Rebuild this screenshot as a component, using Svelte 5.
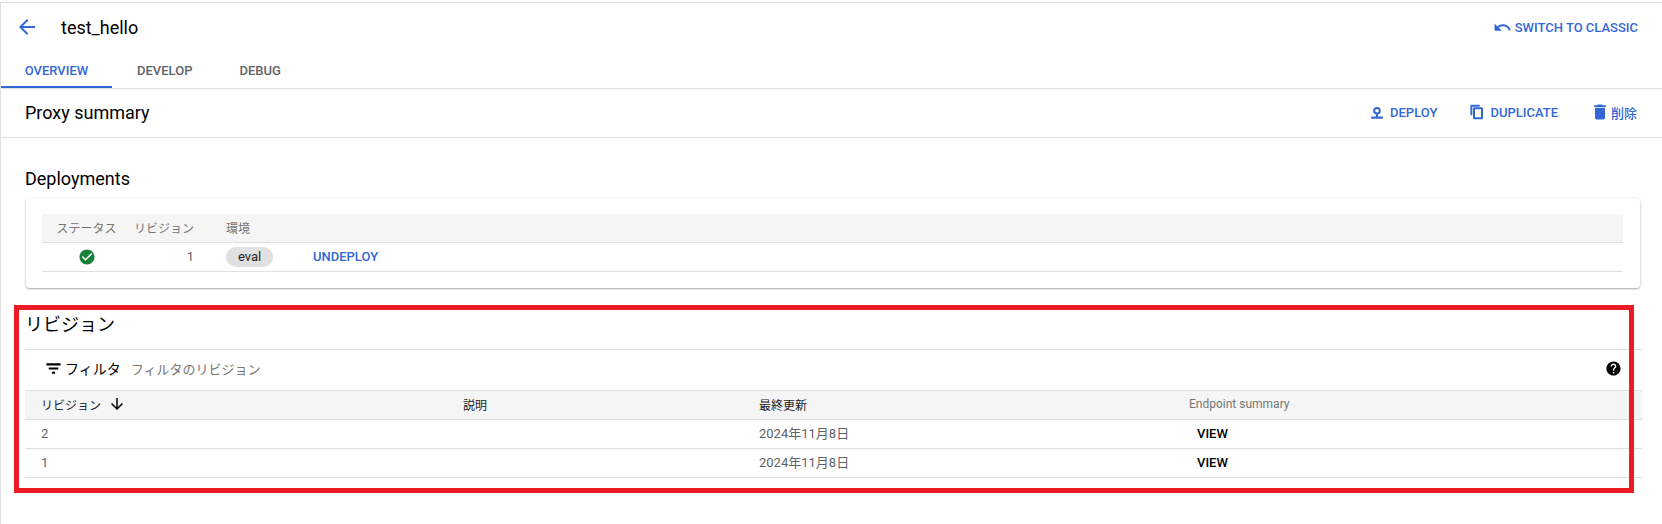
<script>
  const revisions = [
    { id: 2, updated: '2024年11月8日' },
    { id: 1, updated: '2024年11月8日' }
  ];
</script>

<div class="page">
  <header class="top">
    <div class="title-row">
      <svg class="back" viewBox="0 0 24 24"><path d="M20 11H7.83l5.59-5.59L12 4l-8 8 8 8 1.41-1.41L7.83 13H20v-2z" /></svg>
      <h1>test_hello</h1>
      <button class="link switch">
        <svg viewBox="0 0 24 24"><path d="M12.5 8c-2.65 0-5.05.99-6.9 2.6L2 7v9h9l-3.62-3.62c1.39-1.16 3.16-1.88 5.12-1.88 3.54 0 6.55 2.31 7.6 5.5l2.37-.78C21.08 11.03 17.15 8 12.5 8z" /></svg>
        SWITCH TO CLASSIC
      </button>
    </div>
    <nav class="tabs">
      <span class="tab active">OVERVIEW</span>
      <span class="tab">DEVELOP</span>
      <span class="tab">DEBUG</span>
    </nav>
  </header>

  <div class="summary">
    <h2>Proxy summary</h2>
    <div class="actions">
      <button class="link">
        <svg class="wide" viewBox="0 0 24 24"><path d="M5 17.5h14V20H5v-2.5zM12 5.9a4.6 4.6 0 1 1 0 9.2 4.6 4.6 0 0 1 0-9.2zm0 2.4a2.2 2.2 0 1 0 0 4.4 2.2 2.2 0 0 0 0-4.4zM10.8 14h2.4v4h-2.4z" /></svg>
        DEPLOY
      </button>
      <button class="link">
        <svg class="small" viewBox="0 0 24 24"><path d="M16 1H4c-1.1 0-2 .9-2 2v14h3V4h11V1zm3 4H8c-1.1 0-2 .9-2 2v14c0 1.1.9 2 2 2h11c1.1 0 2-.9 2-2V7c0-1.1-.9-2-2-2zm-1 15H9V8h9v12z" /></svg>
        DUPLICATE
      </button>
      <button class="link trash">
        <svg class="wide" viewBox="0 0 24 24"><path d="M6 19c0 1.1.9 2 2 2h8c1.1 0 2-.9 2-2V7H6v12zM19 4h-3.5l-1-1h-5l-1 1H5v2h14V4z" /></svg>
        削除
      </button>
    </div>
  </div>

  <section class="deployments">
    <h3>Deployments</h3>
    <div class="card">
      <div class="dep-row dep-head">
        <span class="c-status">ステータス</span>
        <span class="c-rev">リビジョン</span>
        <span class="c-env">環境</span>
      </div>
      <div class="dep-row dep-body">
        <span class="c-status ok">
          <svg viewBox="0 0 24 24"><path d="M12 2C6.48 2 2 6.48 2 12s4.48 10 10 10 10-4.48 10-10S17.52 2 12 2zm-2 15-5-5 1.41-1.41L10 14.17l7.59-7.59L19 8l-9 9z" /></svg>
        </span>
        <span class="c-rev num">1</span>
        <span class="c-env"><span class="chip">eval</span></span>
        <span class="undeploy">UNDEPLOY</span>
      </div>
    </div>
  </section>

  <section class="revisions">
    <h3 class="rev-title">リビジョン</h3>
    <div class="filter">
      <svg class="filter-icon" viewBox="0 0 24 24"><path d="M3 5.5h18v2.6H3zM6 10.7h12v2.6H6zM10 16h4v2.6h-4z" /></svg>
      <span class="filter-label">フィルタ</span>
      <span class="filter-hint">フィルタのリビジョン</span>
      <svg class="help" viewBox="0 0 24 24"><path d="M12 2C6.48 2 2 6.48 2 12s4.48 10 10 10 10-4.48 10-10S17.52 2 12 2zm1 17h-2v-2h2v2zm2.07-7.75-.9.92C13.45 12.9 13 13.5 13 15h-2v-.5c0-1.1.45-2.1 1.17-2.83l1.24-1.26c.37-.36.59-.86.59-1.41 0-1.1-.9-2-2-2s-2 .9-2 2H8c0-2.21 1.79-4 4-4s4 1.79 4 4c0 .88-.36 1.68-.93 2.25z" /></svg>
    </div>
    <div class="rev-row rev-head">
      <span class="r-id sorted">
        リビジョン
        <svg viewBox="0 0 24 24"><path d="M20 12l-1.41-1.41L13 16.17V4h-2v12.17l-5.58-5.59L4 12l8 8 8-8z" /></svg>
      </span>
      <span class="r-desc">説明</span>
      <span class="r-date">最終更新</span>
      <span class="r-end">Endpoint summary</span>
    </div>
    {#each revisions as rev (rev.id)}
      <div class="rev-row rev-body">
        <span class="r-id">{rev.id}</span>
        <span class="r-desc"></span>
        <span class="r-date">{rev.updated}</span>
        <span class="r-end view">VIEW</span>
      </div>
    {/each}
  </section>

  <div class="highlight"></div>
</div>

<style>
  :global(body) {
    margin: 0;
    background: #fff;
  }

  .page {
    position: relative;
    box-sizing: border-box;
    height: 522px;
    overflow: hidden;
    margin-top: 2px;
    border-top: 1px solid #e0e0e0;
    border-left: 1px solid #e0e0e0;
    font-family: Roboto, "Noto Sans CJK JP", sans-serif;
    color: #000;
  }

  h1,
  h2,
  h3 {
    margin: 0;
    font-weight: 400;
    font-size: 18px;
  }

  svg {
    fill: currentColor;
    display: block;
    flex: none;
  }

  .link {
    display: flex;
    align-items: center;
    gap: 3px;
    padding: 0;
    border: none;
    background: none;
    font: inherit;
    font-size: 13px;
    font-weight: 500;
    color: #3367d6;
  }

  .link svg.wide {
    width: 20px;
    height: 20px;
  }

  .link svg.small {
    width: 16px;
    height: 16px;
    margin-right: 2px;
  }

  .trash {
    gap: 1px;
  }

  .switch svg {
    width: 19px;
    height: 19px;
  }

  .top {
    border-bottom: 1px solid #e0e0e0;
    height: 85px;
  }

  .title-row {
    display: flex;
    align-items: center;
    height: 48px;
    padding: 0 24px 0 14px;
  }

  .back {
    width: 24px;
    height: 24px;
    color: #3367d6;
  }

  .title-row h1 {
    margin-left: 22px;
    font-size: 18px;
  }

  .switch {
    margin-left: auto;
  }

  .tabs {
    display: flex;
    height: 37px;
  }

  .tab {
    box-sizing: border-box;
    width: 111px;
    height: 37px;
    padding-top: 12px;
    text-align: center;
    font-size: 13px;
    font-weight: 500;
    color: #5f6368;
  }

  .tab.active {
    color: #3367d6;
    border-bottom: 2px solid #3367d6;
  }

  .tab + .tab {
    width: auto;
    margin-left: 25px;
    margin-right: 22px;
  }

  .summary {
    display: flex;
    align-items: center;
    justify-content: space-between;
    box-sizing: border-box;
    height: 49px;
    padding: 0 25px 2px 24px;
    border-bottom: 1px solid #e0e0e0;
  }

  .actions {
    display: flex;
    gap: 32px;
  }

  .deployments {
    padding: 30px 22px 0 24px;
  }

  .card {
    margin: 9px 0 0 1px;
    padding: 16px 17px 16px 16px;
    border-radius: 4px;
    box-shadow: 0 1px 2px rgba(60, 64, 67, 0.45), 0 0 3px rgba(60, 64, 67, 0.08);
  }

  .dep-row {
    display: flex;
    align-items: center;
    height: 28px;
    border-bottom: 1px solid #e0e0e0;
    font-size: 12px;
    color: #5f6368;
  }

  .dep-head {
    background: #f5f5f5;
    color: #757575;
  }

  .dep-head span {
    margin-bottom: 2px;
  }

  .dep-body .num,
  .dep-body .undeploy {
    margin-bottom: 2px;
  }

  .c-status {
    width: 87px;
    text-align: center;
    flex: none;
    padding-left: 1px;
  }

  .ok {
    display: flex;
    justify-content: center;
    box-sizing: content-box;
    padding-left: 2px;
    width: 86px;
    color: #188038;
  }

  .ok svg {
    width: 18px;
    height: 18px;
  }

  .c-rev {
    width: 64px;
    margin-right: 32px;
    text-align: right;
    flex: none;
    box-sizing: border-box;
  }

  .num {
    font-size: 13px;
  }

  .c-env {
    width: 87px;
    flex: none;
  }

  .chip {
    display: inline-block;
    padding: 0 12px;
    height: 20px;
    line-height: 20px;
    border-radius: 10px;
    background: #e0e0e0;
    font-size: 13px;
    color: #202124;
  }

  .undeploy {
    font-size: 13px;
    font-weight: 500;
    color: #3367d6;
  }

  .revisions {
    margin: 0 20px 0 24px;
    padding-top: 19px;
  }

  .rev-title {
    height: 42px;
    line-height: 36px;
    border-bottom: 1px solid #e0e0e0;
  }

  .filter {
    display: flex;
    align-items: center;
    box-sizing: border-box;
    height: 40px;
    padding: 0 20px 4px 19px;
    font-size: 13px;
  }

  .filter-icon {
    width: 19px;
    height: 19px;
    margin-right: 2px;
  }

  .filter-label {
    margin-right: 10px;
    font-size: 14px;
  }

  .filter-hint {
    color: #757575;
  }

  .help {
    width: 17px;
    height: 17px;
    margin-left: auto;
  }

  .rev-row {
    display: flex;
    align-items: center;
    height: 28px;
    border-bottom: 1px solid #e0e0e0;
    font-size: 13px;
    color: #5f6368;
  }

  .rev-row > span {
    margin-bottom: 2px;
  }

  .rev-body > .r-date {
    margin-bottom: 4px;
  }

  .rev-head {
    height: 28px;
    border-top: 1px solid #e0e0e0;
    background: #f5f5f5;
    font-size: 12px;
    color: #757575;
  }

  .r-id {
    box-sizing: border-box;
    width: 438px;
    padding-left: 16px;
    display: flex;
    align-items: center;
    gap: 7px;
    flex: none;
  }

  .sorted {
    color: #202124;
  }

  .sorted svg {
    width: 18px;
    height: 18px;
    color: #000;
  }

  .r-desc {
    width: 296px;
    flex: none;
  }

  .r-date {
    width: 430px;
    flex: none;
  }

  .rev-head .r-date,
  .rev-head .r-desc {
    color: #202124;
  }

  .view {
    margin-left: 8px;
    font-weight: 500;
    color: #000;
  }

  .highlight {
    position: absolute;
    box-sizing: border-box;
    left: 13px;
    top: 302px;
    width: 1620px;
    height: 188px;
    border: 5px solid #ed1c24;
    pointer-events: none;
  }
</style>
